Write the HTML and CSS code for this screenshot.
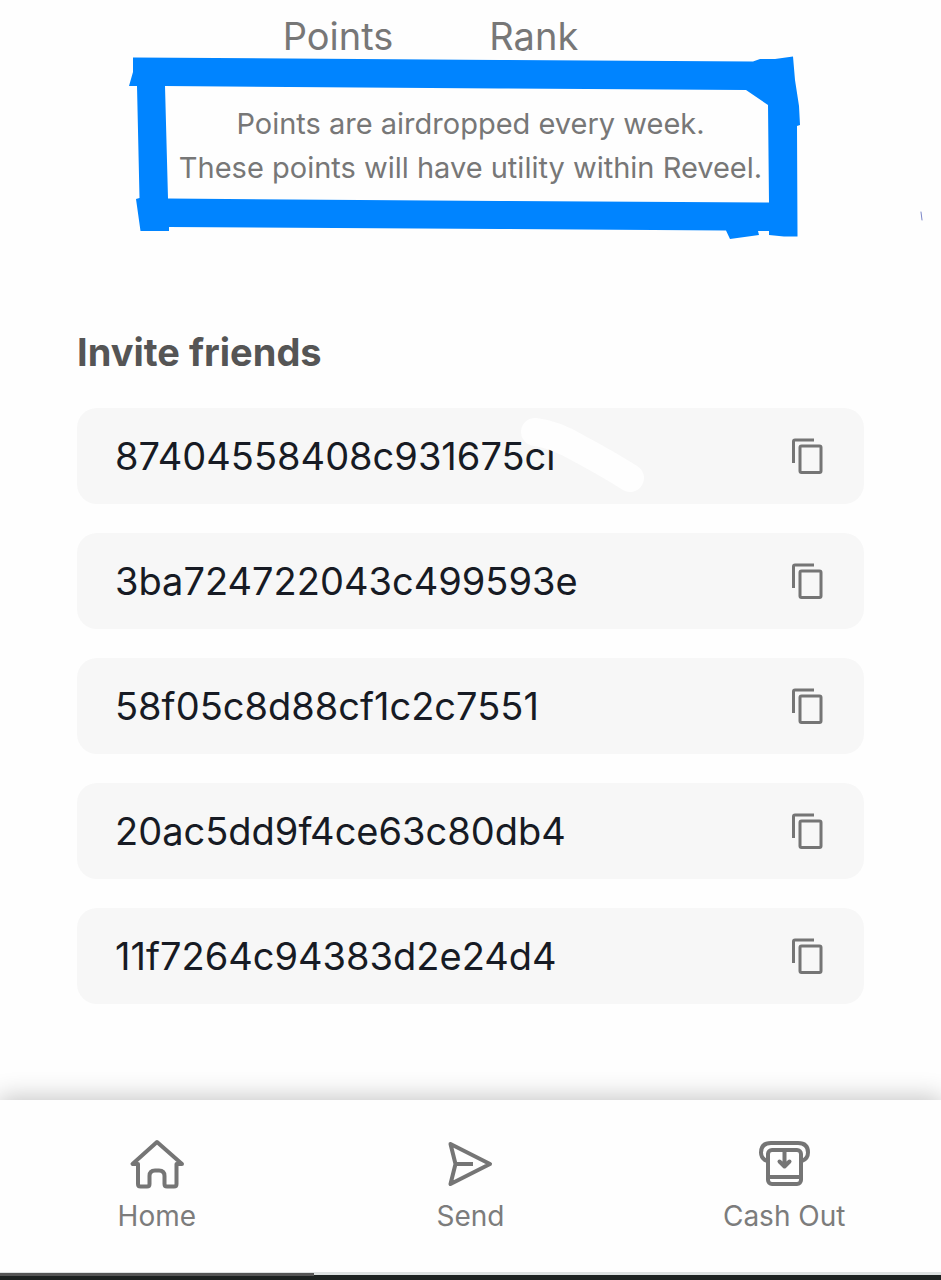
FILE: index.html
```html
<!DOCTYPE html>
<html lang="en">
<head>
    <meta charset="utf-8">
    <meta name="viewport" content="width=device-width, initial-scale=1">
    <title>Reveel</title>
    <link rel="stylesheet" href="styles.css">
</head>
<body>

<svg class="icon-defs" aria-hidden="true">
    <symbol id="copy" viewBox="0 0 34 38">
        <path d="M3.500 26V4.500q0-1.500 1.500-1.500H24"/>
        <rect x="10" y="9" width="21" height="26.500" rx="1.500"/>
    </symbol>
</svg>

<main class="content">
    <div class="stats">
        <span>Points</span>
        <span>Rank</span>
    </div>

    <div class="notice">
        <p>Points are airdropped every week.<br>These points will have utility within Reveel.</p>
        <svg class="marker" viewBox="0 0 941 250" aria-hidden="true">
            <path fill-rule="evenodd" d="M133 57.500L500 60 753 61.500 760 59 775 59 793 56.500 795 80 799 106 800 125 797 126 797.500 236.500 784 236.500 769 235 769 231 758 231 759 235 730 239 726 230.500 500 229 169 227 169 231 140.500 231 136 199 139.500 198 137 86 129 86 133 72ZM165 86L168 198.500 500 201 769 202.500 768 105 746 90 500 88.500Z"/>
        </svg>
        <svg class="speck" viewBox="0 0 4 10" aria-hidden="true"><path d="M1 1L2 9"/></svg>
    </div>

    <h2>Invite friends</h2>
    <ul class="codes">
        <li>
            <span class="code">87404558408c931675ci</span>
            <svg class="smudge" viewBox="0 0 126 76" aria-hidden="true"><path d="M15 14Q34 16 58 30Q88 46 110 60"/></svg>
            <button aria-label="Copy code"><svg><use href="#copy"/></svg></button>
        </li>
        <li>
            <span class="code">3ba724722043c499593e</span>
            <button aria-label="Copy code"><svg><use href="#copy"/></svg></button>
        </li>
        <li>
            <span class="code">58f05c8d88cf1c2c7551</span>
            <button aria-label="Copy code"><svg><use href="#copy"/></svg></button>
        </li>
        <li>
            <span class="code">20ac5dd9f4ce63c80db4</span>
            <button aria-label="Copy code"><svg><use href="#copy"/></svg></button>
        </li>
        <li>
            <span class="code">11f7264c94383d2e24d4</span>
            <button aria-label="Copy code"><svg><use href="#copy"/></svg></button>
        </li>
    </ul>
</main>

<nav class="tabs">
    <a href="#home">
        <svg viewBox="0 0 56 52" aria-hidden="true">
            <path d="M28 4L3.500 26H9V46Q9 48.500 11.500 48.500H18Q20.500 48.500 20.500 46V38Q20.500 32.500 26 32.500H30Q35.500 32.500 35.500 38V46Q35.500 48.500 38 48.500H45Q47.500 48.500 47.500 46V26H53Z"/>
        </svg>
        Home
    </a>
    <a href="#send">
        <svg viewBox="0 0 56 52" aria-hidden="true">
            <path d="M7.500 6L47 26 7.500 46 12.500 26Z"/>
            <path d="M12.500 26H30" stroke-linecap="butt"/>
        </svg>
        Send
    </a>
    <a href="#cash-out">
        <svg viewBox="0 0 56 52" aria-hidden="true">
            <path d="M11 23Q5 20.500 5 14.500Q5 5 15 5H42Q52 5 52 14.500Q52 20.500 46 23"/>
            <rect x="12" y="12" width="33" height="34" rx="4"/>
            <path d="M12 39H45M28.500 12V28M23.500 23.500L28.500 28.500 33.500 23.500"/>
        </svg>
        Cash Out
    </a>
</nav>
<div class="system-bar"><div class="progress"></div></div>

</body>
</html>
```

FILE: styles.css
```css
* {
    box-sizing: border-box;
}
body {
    margin: 0;
    min-height: 100vh;
    display: flex;
    flex-direction: column;
    background-color: #fefefe;
    color: #777;
    font-family: Inter, "Liberation Sans", sans-serif;
    overflow-x: hidden;
}
.icon-defs {
    position: absolute;
    width: 0;
    height: 0;
}
svg {
    fill: none;
    stroke: #757575;
    stroke-width: 4px;
    stroke-linejoin: round;
    stroke-linecap: round;
}
.content {
    flex: 1;
    padding: 12px 77px 0;
}
.stats {
    display: flex;
    justify-content: center;
    gap: 96px;
    padding-right: 80px;
    font-size: 38px;
    line-height: 48px;
}
.notice {
    padding: 42px 0;
    text-align: center;
    font-size: 29px;
    line-height: 44px;
}
.notice p {
    margin: 0;
}
/* hand drawn box round the notice */
.marker {
    position: absolute;
    top: 0;
    left: 50%;
    width: 941px;
    height: 250px;
    margin-left: -471px;
    fill: #0084ff;
    stroke: none;
    pointer-events: none;
}
.speck {
    position: absolute;
    top: 211px;
    right: 17px;
    width: 4px;
    height: 10px;
    stroke: #7b86c8;
    stroke-width: 1px;
}
h2 {
    margin: 96px 0 32px;
    color: #555;
    font-size: 38px;
    line-height: 48px;
}
.codes {
    display: flex;
    flex-direction: column;
    gap: 29px;
    margin: 0;
    padding: 0;
    list-style: none;
}
.codes li {
    position: relative;
    display: flex;
    align-items: center;
    justify-content: space-between;
    height: 96px;
    padding: 0 40px 0 38px;
    border-radius: 20px;
    background-color: #f7f7f7;
}
.code {
    color: #171b24;
    font-size: 38px;
}
.codes button {
    padding: 0;
    border: none;
    background: none;
    cursor: pointer;
}
.codes button svg {
    display: block;
    width: 34px;
    height: 38px;
    stroke-width: 3px;
    stroke-linecap: butt;
}
.codes .smudge {
    position: absolute;
    top: 10px;
    left: 443px;
    width: 126px;
    height: 76px;
    stroke: #fefefe;
    stroke-width: 28px;
}
.tabs {
    display: flex;
    height: 172px;
    background-color: #fefefe;
    box-shadow: 0 0 24px 2px rgba(0, 0, 0, 0.24);
}
.tabs a {
    flex: 1;
    display: flex;
    flex-direction: column;
    align-items: center;
    gap: 8px;
    padding-top: 38px;
    color: #7c7c7c;
    font-size: 28px;
    line-height: 36px;
    text-decoration: none;
}
.tabs svg {
    width: 56px;
    height: 52px;
}
.system-bar {
    position: relative;
    height: 8px;
    border-top: 3px solid #dde1e1;
    background-color: #1d2221;
}
.progress {
    width: 33.33%;
    height: 3px;
    margin-top: -2px;
    background-color: #555;
}
```
